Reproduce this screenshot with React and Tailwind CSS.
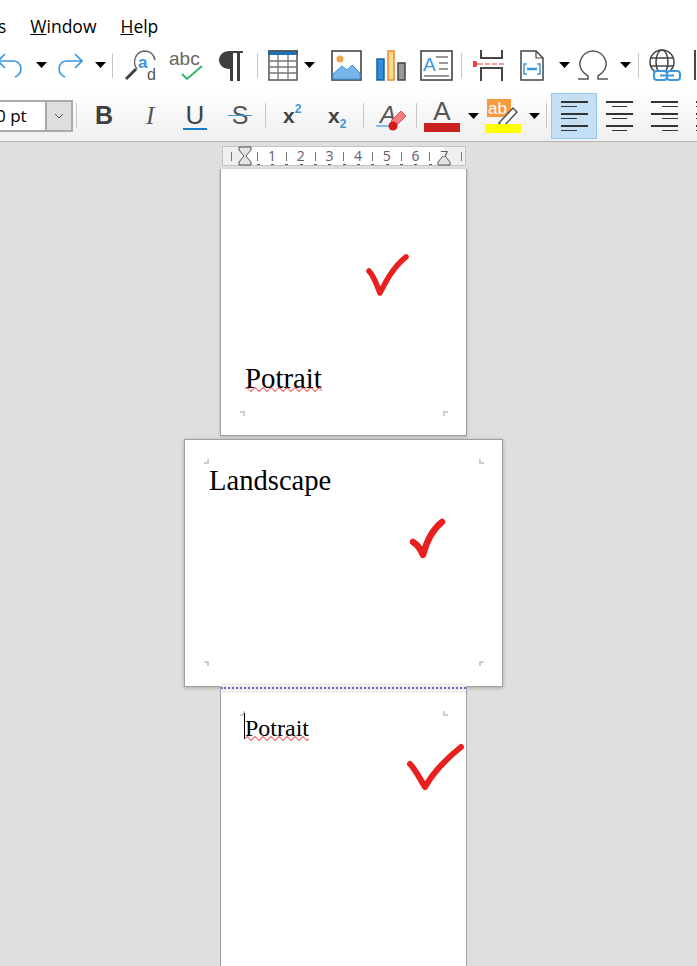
const BLUE = "#3a96dd";
const DARK = "#3f3f3f";

const Caret = ({ className = "" }) => (
  <svg width="11" height="6" viewBox="0 0 11 6" className={`shrink-0 ${className}`}>
    <path d="M0 0h11L5.500 6z" fill="#000" />
  </svg>
);

const Sep = ({ className = "" }) => (
  <div className={`w-px h-[25px] bg-[#c8c8c8] shrink-0 ${className}`} />
);

const Undo = ({ className = "" }) => (
  <svg width="27" height="28" viewBox="0 0 27 28" fill="none" stroke={BLUE} strokeWidth="1.6" className={`shrink-0 ${className}`}>
    <path d="M8 3 1 10l7 7M1 10h15c9 0 11 12 2 16" />
  </svg>
);

const Redo = ({ className = "" }) => (
  <svg width="27" height="28" viewBox="0 0 27 28" fill="none" stroke={BLUE} strokeWidth="1.6" className={`shrink-0 ${className}`}>
    <path d="m19 3 7 7-7 7M26 10H11C2 10 0 22 9 26" />
  </svg>
);

const FindIcon = ({ className = "" }) => (
  <svg width="34" height="36" viewBox="0 0 34 36" className={`shrink-0 ${className}`}>
    <path d="M1 32 11 22" stroke={DARK} strokeWidth="3" fill="none" />
    <path d="M12 22C7 16 10 5 19 4c7 0 10 4 11 9" stroke="#666" strokeWidth="1.4" fill="none" />
    <text x="13" y="21" fontFamily="Liberation Sans" fontWeight="700" fontSize="17" fill={BLUE}>a</text>
    <text x="22" y="33" fontFamily="Liberation Sans" fontSize="16" fill="#555">d</text>
  </svg>
);

const SpellIcon = ({ className = "" }) => (
  <svg width="35" height="32" viewBox="0 0 35 32" className={`shrink-0 ${className}`}>
    <text x="0" y="16" fontFamily="Liberation Sans" fontSize="19" fill="#666">abc</text>
    <path d="m13 25 5 5L33 17" stroke="#34b567" strokeWidth="2" fill="none" />
  </svg>
);

const Pilcrow = ({ className = "" }) => (
  <svg width="24" height="31" viewBox="0 0 24 31" className={`shrink-0 ${className}`}>
    <path d="M11 1C3 1 0 6 0 10s3 9 11 9z" fill={DARK} />
    <path d="M11 1h13v2H11zM11 1h3v30h-3zM18 1h3v30h-3z" fill={DARK} />
  </svg>
);

const TableIcon = ({ className = "" }) => (
  <svg width="30" height="31" viewBox="0 0 30 31" className={`shrink-0 ${className}`}>
    <rect x="0" y="0" width="30" height="5" fill="#1c71b8" />
    <rect x="1" y="1" width="28" height="29" fill="none" stroke="#555" strokeWidth="1.5" />
    <path d="M1 11h28M1 17h28M1 23h28M10 5v25M20 5v25" stroke="#777" strokeWidth="1.3" />
  </svg>
);

const ImageIcon = ({ className = "" }) => (
  <svg width="31" height="31" viewBox="0 0 31 31" className={`shrink-0 ${className}`}>
    <rect x="1" y="1" width="29" height="29" fill="#fff" stroke="#444" strokeWidth="1.6" />
    <path d="M2 29V24l9-8 5 4 5-5 8 8v6z" fill="#77b5ea" stroke="#3a96dd" />
    <circle cx="9" cy="9" r="3.500" fill="#f7a54a" />
  </svg>
);

const ChartIcon = ({ className = "" }) => (
  <svg width="30" height="31" viewBox="0 0 30 31" className={`shrink-0 ${className}`}>
    <rect x="1" y="9" width="7" height="21" fill="#2f8fdc" stroke="#1c5f9e" strokeWidth="1.500" />
    <rect x="12" y="1" width="6" height="29" fill="#fbd98e" stroke="#f08c2e" strokeWidth="1.500" />
    <rect x="22" y="13" width="7" height="17" fill="#999" stroke="#444" strokeWidth="1.500" />
  </svg>
);

const TextBoxIcon = ({ className = "" }) => (
  <svg width="33" height="31" viewBox="0 0 33 31" className={`shrink-0 ${className}`}>
    <rect x="1" y="1" width="31" height="29" fill="#fff" stroke="#444" strokeWidth="1.600" />
    <text x="3" y="21" fontFamily="Liberation Sans" fontSize="19" fill={BLUE}>A</text>
    <path d="M16 7h12M19 13h9M19 19h9M4 26h25" stroke="#777" strokeWidth="1.600" />
  </svg>
);

const BreakIcon = ({ className = "" }) => (
  <svg width="31" height="31" viewBox="0 0 31 31" className={`shrink-0 ${className}`}>
    <path d="M8 0v8h21V0M8 31V18h21v13" fill="none" stroke="#444" strokeWidth="2" />
    <path d="M5 14h26" stroke="#ee3a3a" strokeWidth="1.200" strokeDasharray="5 2" />
    <path d="M0 11h3l2 3-2 3H0z" fill="#ee3a3a" />
  </svg>
);

const FieldIcon = ({ className = "" }) => (
  <svg width="24" height="31" viewBox="0 0 24 31" className={`shrink-0 ${className}`}>
    <path d="M1 1h15l7 7v22H1z" fill="#fff" stroke="#444" strokeWidth="1.500" />
    <path d="M16 1v7h7" fill="none" stroke="#444" strokeWidth="1.200" />
    <path d="M7 14H4v10h3M17 14h3v10h-3" fill="none" stroke={BLUE} strokeWidth="1.500" />
    <path d="M7 19h10" stroke={BLUE} strokeWidth="2.500" />
  </svg>
);

const Omega = ({ className = "" }) => (
  <svg width="30" height="31" viewBox="0 0 30 31" className={`shrink-0 ${className}`}>
    <path d="M0 29h10v-3C3 22 1 16 2 12 4 4 10 1 15 1s11 3 13 11c1 4-1 10-8 14v3h10" fill="none" stroke="#555" strokeWidth="1.500" />
  </svg>
);

const LinkIcon = ({ className = "" }) => (
  <svg width="33" height="32" viewBox="0 0 33 32" className={`shrink-0 ${className}`}>
    <circle cx="14" cy="13" r="12" fill="none" stroke="#444" strokeWidth="1.500" />
    <ellipse cx="14" cy="13" rx="6" ry="12" fill="none" stroke="#444" strokeWidth="1.500" />
    <path d="M2 9h24M2 17h24" stroke="#444" strokeWidth="1.500" />
    <rect x="6" y="22" width="13" height="9" rx="3" fill="#fff" stroke={BLUE} strokeWidth="2" />
    <rect x="19" y="22" width="13" height="9" rx="3" fill="#fff" stroke={BLUE} strokeWidth="2" />
    <path d="M12 26.500h14" stroke={BLUE} strokeWidth="2" />
  </svg>
);

const ClearIcon = ({ className = "" }) => (
  <svg width="31" height="32" viewBox="0 0 31 32" className={`shrink-0 ${className}`}>
    <text x="4" y="23" fontFamily="Liberation Sans" fontStyle="italic" fontSize="24" fill="#555">A</text>
    <path d="M0 26h14" stroke={BLUE} strokeWidth="1.200" />
    <path d="m15 21 10-10 5 5-10 10z" fill="#f77c80" stroke="#e65058" />
    <circle cx="17" cy="26" r="4.500" fill="#d21c1c" />
  </svg>
);

const HighlightIcon = ({ className = "" }) => (
  <svg width="36" height="34" viewBox="0 0 36 34" className={`shrink-0 ${className}`}>
    <rect x="2" y="0" width="24" height="18" fill="#f79a3e" />
    <text x="3" y="15" fontFamily="Liberation Sans" fontSize="17" fill="#fff">ab</text>
    <path d="m14 24 14-15 4 4-14 15z" fill="#fff" stroke="#555" strokeWidth="1.500" />
    <path d="m14 24-2 4h6z" fill="#333" />
    <rect x="0" y="25" width="36" height="9" fill="#ffff00" />
  </svg>
);

const AlignIcon = ({ rows, className = "" }) => (
  <svg width="27" height="30" viewBox="0 0 27 30" className={`shrink-0 ${className}`}>
    {rows.map(([x, y, w, h]) => (
      <rect key={y} x={x} y={y} width={w} height={h} fill="#333" />
    ))}
  </svg>
);

const alignLeft = [[0, 0, 27, 2], [0, 5, 16, 1], [0, 12, 27, 2], [0, 17, 16, 1], [0, 24, 27, 2], [0, 29, 16, 1]];
const alignCenter = [[0, 0, 27, 2], [6, 5, 15, 1], [0, 12, 27, 2], [6, 17, 15, 1], [0, 24, 27, 2], [6, 29, 15, 1]];
const alignRight = [[0, 0, 27, 2], [11, 5, 16, 1], [0, 12, 27, 2], [11, 17, 16, 1], [0, 24, 27, 2], [11, 29, 16, 1]];

const Squiggle = ({ width, className }) => (
  <svg width={width} height="5" viewBox={`0 0 ${width} 5`} className={`absolute left-0 ${className}`}>
    <path
      d={`M0 2.500 ${Array.from({ length: Math.ceil(width / 4) }, (_, i) => `q2 ${i % 2 ? 3.500 : -3.500} 4 0`).join(" ")}`}
      fill="none"
      stroke="#ee2a2a"
      strokeWidth="1"
    />
  </svg>
);

const Corner = ({ className }) => (
  <div className={`absolute w-[5px] h-[5px] border-[#cdcdcd] ${className}`} />
);

const Check = ({ className, width, height, viewBox, d, stroke = 5 }) => (
  <svg width={width} height={height} viewBox={viewBox} fill="none" className={`absolute ${className}`}>
    <path d={d} stroke="#e8201f" strokeWidth={stroke} strokeLinecap="round" strokeLinejoin="round" />
  </svg>
);

const rulerItems = ["", "1", "", "2", "", "3", "", "4", "", "5", "", "6", "", "7"];

const Ruler = () => (
  <div className="w-[244px] h-[20px] mt-[4px] flex border border-[#c4c4c4] bg-white shrink-0 relative">
    <div className="w-[21px] shrink-0 bg-[#efefef] flex items-center justify-center pr-[4px]">
      <div className="w-px h-[9px] bg-[#777]" />
    </div>
    <div className="w-[200px] shrink-0 flex items-center pl-[7px] text-[14px] leading-none text-[#5f5a70] font-['Open_Sans',sans-serif]">
      {rulerItems.map((t, i) => (
        <div key={i} className="w-[14.350px] h-full shrink-0 flex items-center justify-center relative">
          {t ? <span>{t}</span> : <div className="w-px h-[9px] bg-[#777]" />}
          <div className="absolute bottom-0 left-[6px] w-[3px] h-[2px] border-b border-[#555]" />
        </div>
      ))}
    </div>
    <div className="w-[21px] shrink-0 bg-[#efefef] flex items-center justify-end pr-[3px]">
      <div className="w-px h-[9px] bg-[#777]" />
    </div>
    <svg width="14" height="20" viewBox="0 0 14 20" className="absolute left-[15px] top-[-1px]">
      <path d="M1 1h12v3L8 10l5 6v3H1v-3l5-6-5-6z" fill="#e4e4e4" stroke="#555" />
    </svg>
    <svg width="14" height="10" viewBox="0 0 14 10" className="absolute left-[214px] top-[9px]">
      <path d="M1 9h12V6L8 0H6L1 6z" fill="#e4e4e4" stroke="#555" />
    </svg>
  </div>
);

export default function App() {
  return (
    <div className="w-[697px] h-[966px] overflow-hidden bg-[#dfdfdd] flex flex-col font-['Liberation_Serif',serif]">
      <div className="bg-white shrink-0">
        <div className="h-[40px] pt-[15px] flex items-start text-[17.500px] leading-[22px] text-black font-['Open_Sans',sans-serif] overflow-hidden">
          <span className="ml-[-2px]">s</span>
          <span className="ml-[24px]"><u>W</u>indow</span>
          <span className="ml-[24px]"><u>H</u>elp</span>
        </div>

        <div className="h-[50px] flex items-center overflow-hidden">
          <Undo className="ml-[-3px]" />
          <Caret className="ml-[12px]" />
          <Redo className="ml-[9px]" />
          <Caret className="ml-[12px]" />
          <Sep className="ml-[6px]" />
          <FindIcon className="ml-[12px]" />
          <SpellIcon className="ml-[10px]" />
          <Pilcrow className="ml-[15px]" />
          <Sep className="ml-[14px]" />
          <TableIcon className="ml-[10px]" />
          <Caret className="ml-[6px]" />
          <ImageIcon className="ml-[16px]" />
          <ChartIcon className="ml-[14px]" />
          <TextBoxIcon className="ml-[14px]" />
          <Sep className="ml-[8px]" />
          <BreakIcon className="ml-[11px]" />
          <FieldIcon className="ml-[16px]" />
          <Caret className="ml-[15px]" />
          <Omega className="ml-[8px]" />
          <Caret className="ml-[12px]" />
          <Sep className="ml-[7px]" />
          <LinkIcon className="ml-[9px]" />
          <div className="w-[4px] h-[30px] ml-[13px] border-l-2 border-[#444] shrink-0" />
        </div>

        <div className="h-[52px] flex items-center overflow-hidden border-b border-[#b4b4b4] bg-gradient-to-b from-white to-[#efefef]">
          <div className="ml-[-4px] w-[77px] h-[32px] flex border-2 border-[#aaaaaa] border-l-0 bg-white shrink-0">
            <span className="flex-1 leading-[28px] text-[17px] text-black font-['Open_Sans',sans-serif]">0 pt</span>
            <div className="w-[26px] bg-[#dedede] border-l-2 border-[#aaaaaa] flex items-center justify-center">
              <svg width="10" height="6" viewBox="0 0 10 6" fill="none" stroke="#555"><path d="m1 1 4 4 4-4" /></svg>
            </div>
          </div>
          <Sep className="ml-[3px]" />
          <span className="ml-[18px] w-[16px] shrink-0 text-[25px] leading-none font-bold text-[#3f3f3f] font-['Liberation_Sans',sans-serif]">B</span>
          <span className="ml-[35px] w-[10px] shrink-0 text-[25px] leading-none italic text-[#555] font-['Liberation_Serif',serif]">I</span>
          <span className="ml-[27px] w-[24px] shrink-0 text-[26px] leading-none text-center text-[#444] border-b-2 border-[#1d7fc9] font-['Liberation_Sans',sans-serif]">U</span>
          <span className="ml-[21px] w-[24px] shrink-0 text-[25px] leading-none text-center text-[#555] relative font-['Liberation_Sans',sans-serif]">
            S
            <span className="absolute left-0 right-0 top-[12px] h-px bg-[#3a96dd]" />
          </span>
          <Sep className="ml-[13px]" />
          <span className="ml-[17px] w-[23px] shrink-0 text-[21px] leading-none font-bold text-[#444] font-['Liberation_Sans',sans-serif]">x<sup className="text-[12px] text-[#3a96dd] top-[-10px]">2</sup></span>
          <span className="ml-[22px] w-[23px] shrink-0 text-[21px] leading-none font-bold text-[#444] font-['Liberation_Sans',sans-serif]">x<sub className="text-[12px] text-[#3a96dd] bottom-[-5px]">2</sub></span>
          <Sep className="ml-[12px]" />
          <ClearIcon className="ml-[12px]" />
          <Sep className="ml-[9px]" />
          <div className="ml-[7px] w-[36px] h-[33px] flex flex-col items-center shrink-0">
            <span className="h-[24px] text-[26px] leading-[24px] text-[#555] font-['Liberation_Sans',sans-serif]">A</span>
            <div className="w-full h-[9px] bg-[#c9211e]" />
          </div>
          <Caret className="ml-[8px]" />
          <HighlightIcon className="ml-[6px]" />
          <Caret className="ml-[8px]" />
          <Sep className="ml-[6px]" />
          <div className="ml-[4px] w-[46px] h-[46px] flex items-center justify-center bg-[#c4e0f6] border border-[#90c8f2] shrink-0">
            <AlignIcon rows={alignLeft} />
          </div>
          <AlignIcon rows={alignCenter} className="ml-[9px]" />
          <AlignIcon rows={alignRight} className="ml-[18px]" />
          <AlignIcon rows={alignCenter.map(([, y, , h]) => [0, y, 27, h])} className="ml-[18px]" />
        </div>
      </div>

      <div className="flex-1 flex flex-col items-center min-h-0 pr-[10px]">
        <Ruler />

        <div className="w-[247px] h-[267px] mt-[3px] shrink-0 bg-white relative border-x border-b border-[#a0a0a0] shadow-[0_1px_3px_rgba(0,0,0,0.2)]">
          <Check
            className="left-[144px] top-[84px]"
            width="46"
            height="46"
            viewBox="0 0 46 46"
            d="M4 18c3 3 8 14 11 22C20 30 28 14 41 4"
            stroke={5.500}
          />
          <span className="absolute left-[24px] top-[193px] text-[28.800px] leading-[33px] text-black">
            Potrait
            <Squiggle width={77} className="bottom-[3px]" />
          </span>
          <Corner className="left-[19px] top-[242px] border-t-2 border-r-2" />
          <Corner className="left-[222px] top-[242px] border-t-2 border-l-2" />
        </div>

        <div className="w-[319px] h-[248px] mt-[3px] shrink-0 bg-white relative z-10 border border-[#a0a0a0] shadow-[0_1px_4px_rgba(0,0,0,0.25)]">
          <Corner className="left-[19px] top-[19px] border-r-2 border-b-2" />
          <Corner className="left-[294px] top-[19px] border-l-2 border-b-2" />
          <Corner className="left-[19px] top-[221px] border-t-2 border-r-2" />
          <Corner className="left-[294px] top-[221px] border-t-2 border-l-2" />
          <span className="absolute left-[24px] top-[24px] text-[28.600px] leading-[33px] text-black">Landscape</span>
          <Check
            className="left-[224px] top-[77px]"
            width="38"
            height="42"
            viewBox="0 0 38 42"
            d="M4 25c5 3 8 8 10 13 3-12 9-25 19-33"
            stroke={6.500}
          />
        </div>

        <div className="w-[247px] flex-1 shrink-0 bg-white relative z-20 border-x border-[#a0a0a0]">
          <div className="absolute left-0 right-0 top-[-4px] h-[10px] pt-[4px] bg-[#f0f0f0]">
            <div className="border-t-2 border-dotted border-[#6a6ad8]" />
          </div>
          <Corner className="left-[19px] top-[24px] border-r-2 border-b-2" />
          <Corner className="left-[222px] top-[24px] border-l-2 border-b-2" />
          <div className="absolute left-[23px] top-[26px] w-px h-[26px] bg-black" />
          <span className="absolute left-[24px] top-[27px] text-[24px] leading-[28px] text-black">
            Potrait
            <Squiggle width={64} className="bottom-[1px]" />
          </span>
          <Check
            className="left-[185px] top-[56px]"
            width="60"
            height="50"
            viewBox="0 0 60 50"
            d="M4 21c5 5 10 15 15 23C27 30 40 16 55 4"
            stroke={6}
          />
        </div>
      </div>
    </div>
  );
}
